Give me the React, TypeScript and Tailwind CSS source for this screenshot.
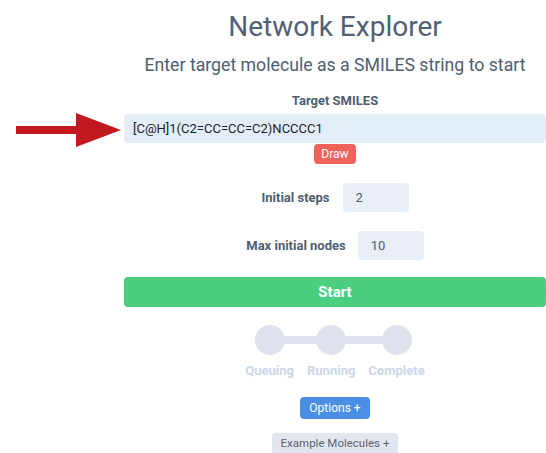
export default function App() {
  return (
    <div className="relative min-h-[453px] w-full overflow-hidden bg-white font-['Roboto',sans-serif] text-[#4f5d70]">
      {/* annotation arrow pointing at the SMILES input */}
      <svg className="absolute left-0 top-0" width="124" height="160" viewBox="0 0 124 160">
        <rect x="16" y="126" width="61" height="8" fill="#c1191f" />
        <polygon points="76,113 121,130 76,147" fill="#c1191f" />
      </svg>

      <div className="ml-[124px] flex w-[422px] flex-col items-center pt-[9px]">
        <h1 className="text-[28px] leading-[36px] font-normal whitespace-nowrap text-[#526073]">Network Explorer</h1>
        <p className="mt-[6px] text-[17.7px] leading-[28px] whitespace-nowrap">
          Enter target molecule as a SMILES string to start
        </p>

        <label className="mt-[12px] text-[13px] leading-[20px] font-bold">Target SMILES</label>
        <input
          readOnly
          value="[C@H]1(C2=CC=CC=C2)NCCCC1"
          className="mt-[3px] h-[29px] w-full rounded-[4px] bg-[#e3edf8] px-[9px] text-[13px] text-[#1a202c] outline-none"
        />
        <button className="mt-[1px] h-[20px] w-[42px] rounded-[4px] bg-[#f0625c] text-[12px] text-white">
          Draw
        </button>

        <div className="mt-[19px] flex items-center gap-[13px]">
          <span className="text-[13px] font-bold">Initial steps</span>
          <input
            readOnly
            value="2"
            className="h-[29px] w-[66px] rounded-[4px] bg-[#e9eef4] px-[13px] text-[13px] outline-none"
          />
        </div>
        <div className="mt-[19px] flex items-center gap-[12px]">
          <span className="text-[13px] font-bold">Max initial nodes</span>
          <input
            readOnly
            value="10"
            className="h-[29px] w-[66px] rounded-[4px] bg-[#e9eef4] px-[13px] text-[13px] outline-none"
          />
        </div>

        <button className="mt-[17px] h-[30px] w-full rounded-[4px] bg-[#4acf80] text-[15px] font-bold text-white">
          Start
        </button>

        {/* progress steps */}
        <div className="relative mt-[18px] flex gap-[13px] text-[13px] font-bold text-[#cad6e8]">
          <div className="absolute left-[25px] right-[28px] top-[11px] h-[8px] bg-[#dde2ec]" />
          {["Queuing", "Running", "Complete"].map((s) => (
            <div key={s} className="relative flex flex-col items-center">
              <div className="h-[30px] w-[30px] rounded-full bg-[#dde2ec]" />
              <span className="mt-[6px] leading-[20px]">{s}</span>
            </div>
          ))}
        </div>

        <button className="mt-[16px] h-[22px] rounded-[4px] bg-[#4b8fe4] px-[9px] text-[12px] text-white">
          Options +
        </button>
        <button className="mt-[14px] h-[22px] rounded-[4px] bg-[#e2e6ee] px-[9px] text-[11.5px] text-[#5a6474]">
          Example Molecules +
        </button>
      </div>
    </div>
  );
}
